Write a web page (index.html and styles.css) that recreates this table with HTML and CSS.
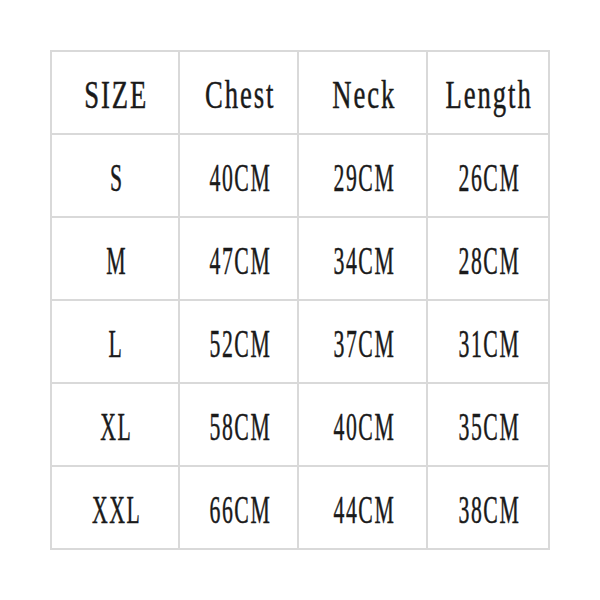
FILE: index.html
```html
<!DOCTYPE html>
<html>
<head>
<meta charset="utf-8">
<link rel="stylesheet" href="styles.css">
</head>
<body>
<div class="chart">
  <div class="cell head"><span class="txt">SIZE</span></div><div class="cell head"><span class="txt">Chest</span></div><div class="cell head"><span class="txt">Neck</span></div><div class="cell head"><span class="txt">Length</span></div>
  <div class="cell"><span class="txt">S</span></div><div class="cell"><span class="txt">40CM</span></div><div class="cell"><span class="txt">29CM</span></div><div class="cell"><span class="txt">26CM</span></div>
  <div class="cell"><span class="txt">M</span></div><div class="cell"><span class="txt">47CM</span></div><div class="cell"><span class="txt">34CM</span></div><div class="cell"><span class="txt">28CM</span></div>
  <div class="cell"><span class="txt">L</span></div><div class="cell"><span class="txt">52CM</span></div><div class="cell"><span class="txt">37CM</span></div><div class="cell"><span class="txt">31CM</span></div>
  <div class="cell"><span class="txt">XL</span></div><div class="cell"><span class="txt">58CM</span></div><div class="cell"><span class="txt">40CM</span></div><div class="cell"><span class="txt">35CM</span></div>
  <div class="cell"><span class="txt">XXL</span></div><div class="cell"><span class="txt">66CM</span></div><div class="cell"><span class="txt">44CM</span></div><div class="cell"><span class="txt">38CM</span></div>
</div>
</body>
</html>
```
FILE: styles.css
```css
html, body {
  margin: 0;
  padding: 0;
  background: #ffffff;
}
body {
  padding: 50px 0 0 50px;
}
.chart {
  display: inline-grid;
  grid-template-columns: 126px 117px 127px 120px;
  grid-auto-rows: 81px;
  gap: 2px;
  padding: 2px;
  background: #d9d9d9;
}
.cell {
  background: #ffffff;
  display: flex;
  align-items: center;
  justify-content: center;
  padding-top: 4px;
  box-sizing: border-box;
  overflow: visible;
}
.txt {
  display: inline-block;
  font-family: "Liberation Serif", serif;
  font-weight: normal;
  font-size: 41px;
  line-height: 1;
  letter-spacing: 3px;
  margin-right: -3px;
  color: #1a1a1a;
  -webkit-text-stroke: 0.5px #1a1a1a;
  white-space: nowrap;
  transform: scaleX(0.53);
  transform-origin: center;
}
.head .txt {
  letter-spacing: 3px;
  margin-right: -3px;
  transform: scaleX(0.65);
}
```
